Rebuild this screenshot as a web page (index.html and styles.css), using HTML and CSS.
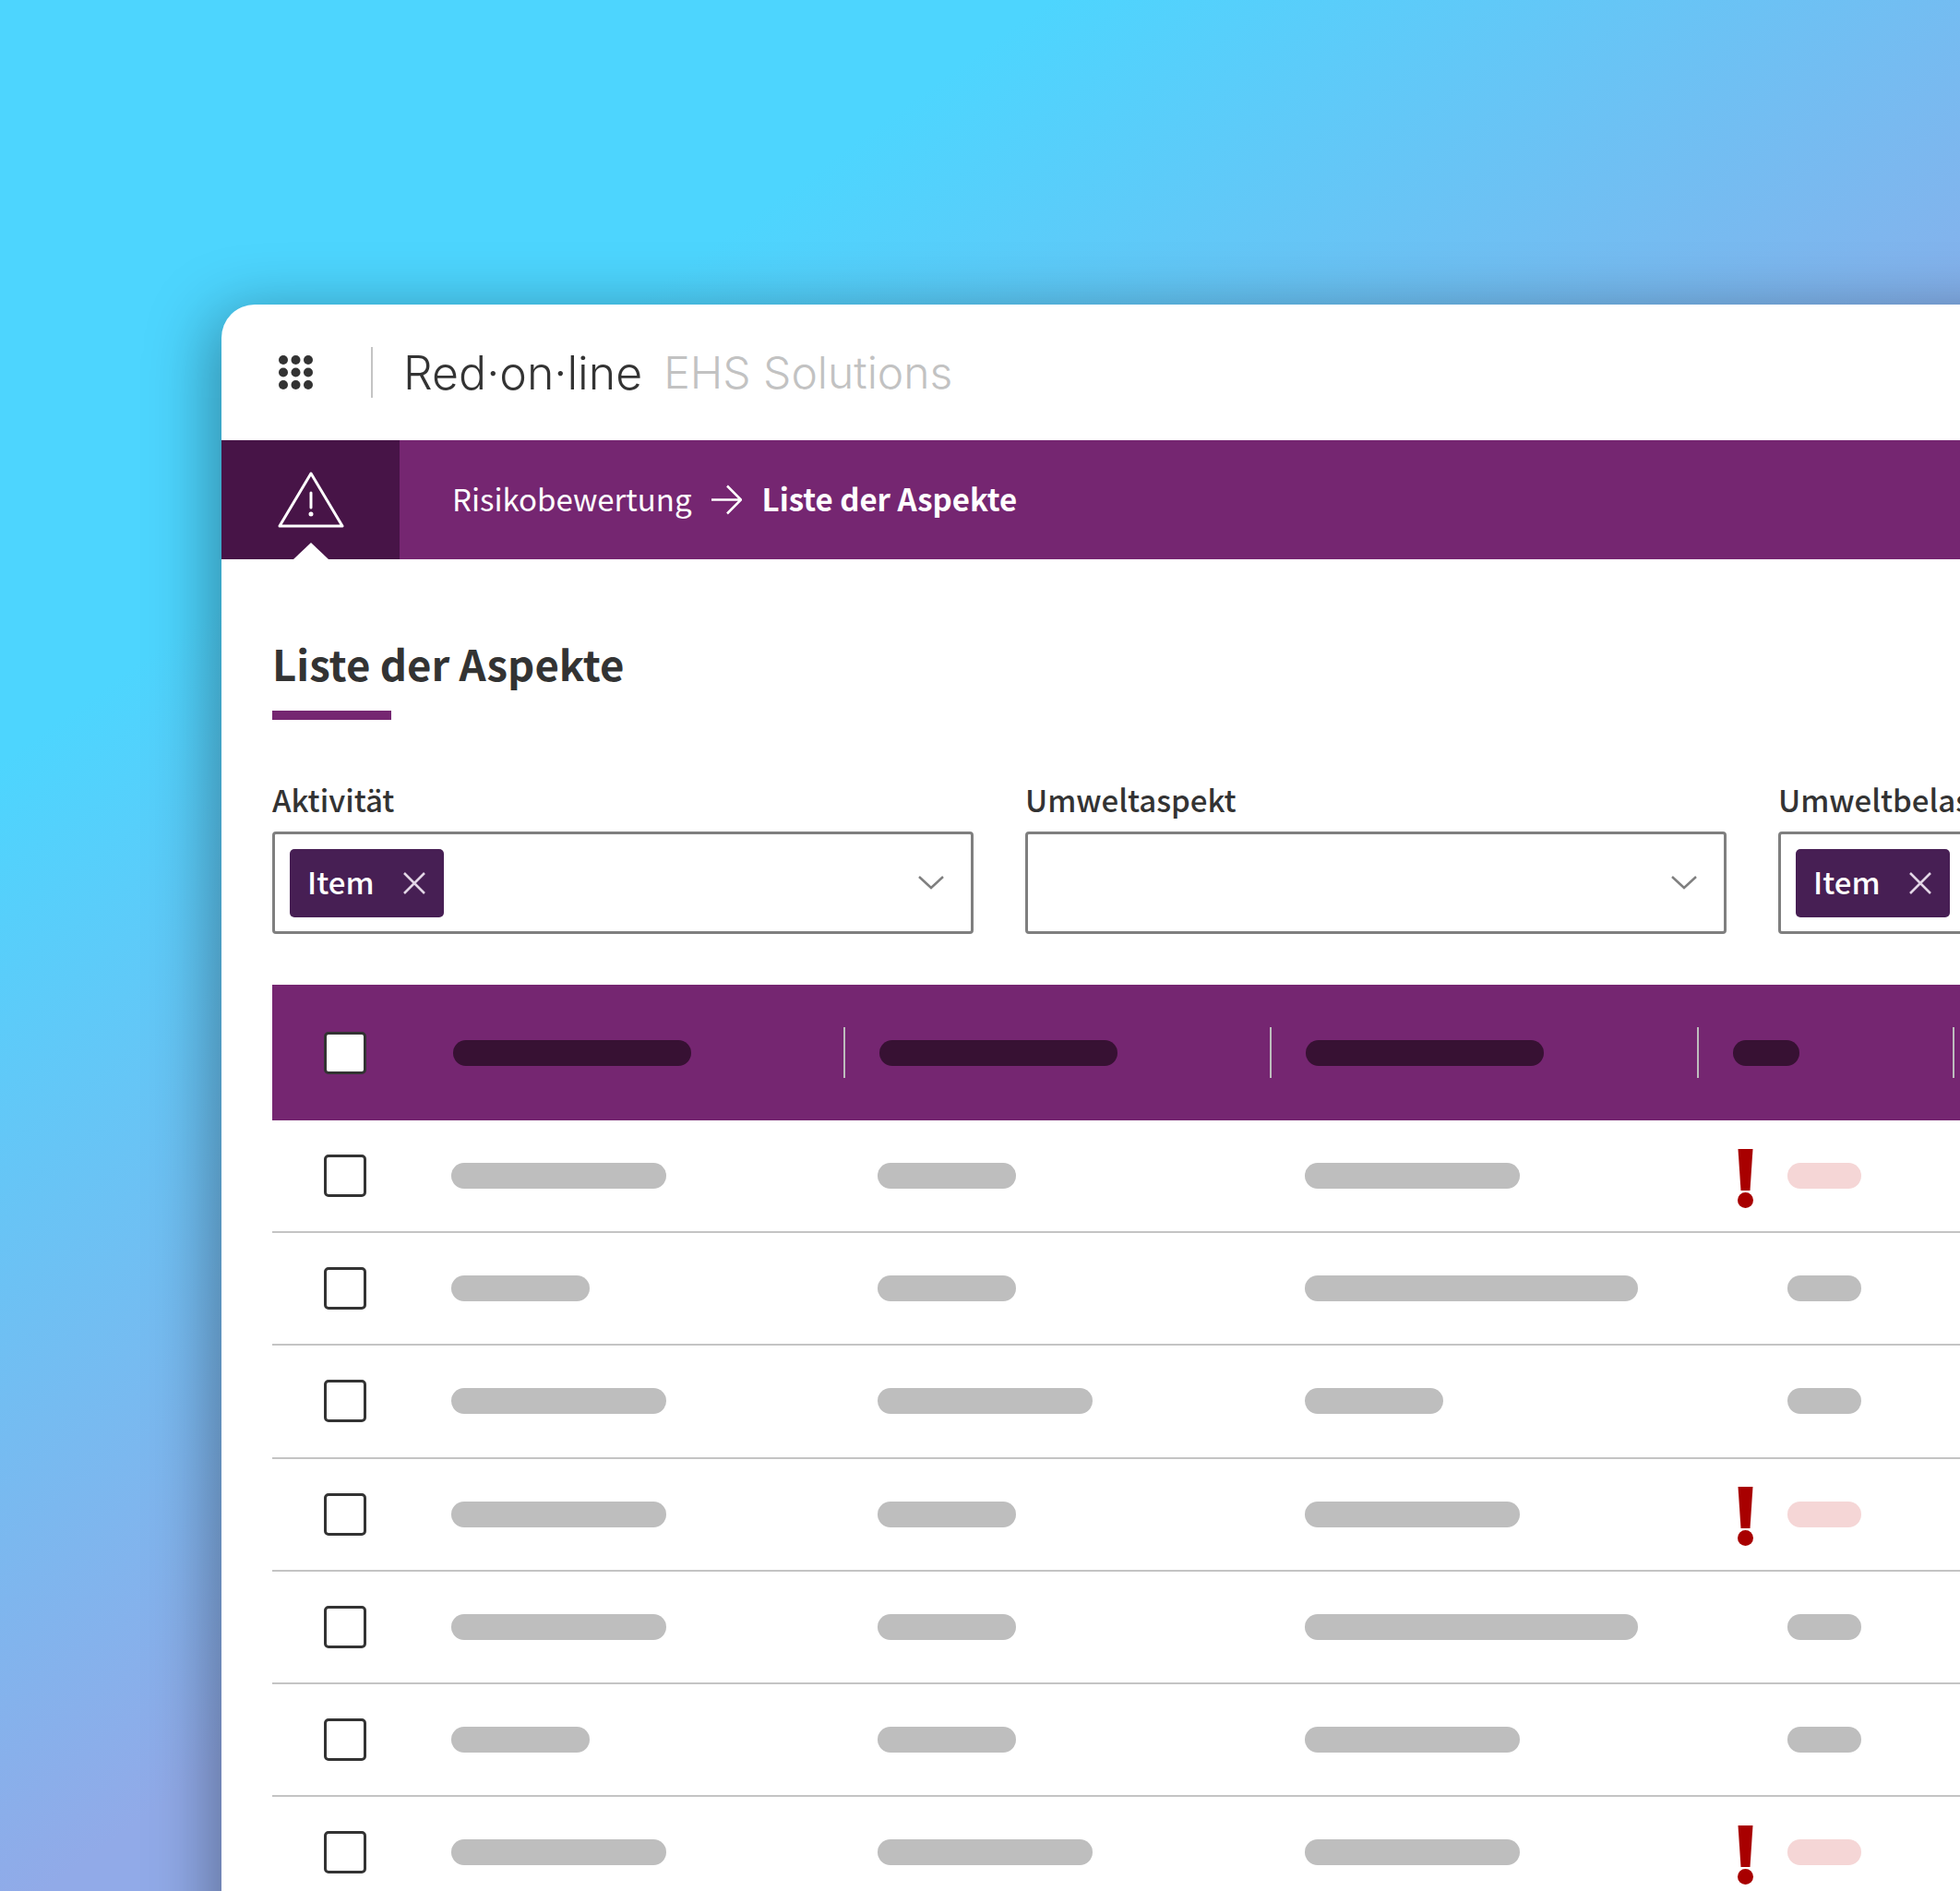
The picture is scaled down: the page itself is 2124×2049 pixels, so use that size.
FILE: index.html
```html
<!DOCTYPE html>
<html lang="de">
<head>
  <meta charset="UTF-8" />
  <title>Liste der Aspekte</title>
  <link rel="stylesheet" href="styles.css">
</head>
<body>
  <div class="window">
    <header class="topbar">
      <svg class="apps" width="37" height="37" viewBox="0 0 37 37" fill="#333">
        <circle cx="5" cy="5" r="5"/><circle cx="18.5" cy="5" r="5"/><circle cx="32" cy="5" r="5"/>
        <circle cx="5" cy="18.5" r="5"/><circle cx="18.5" cy="18.5" r="5"/><circle cx="32" cy="18.5" r="5"/>
        <circle cx="5" cy="32" r="5"/><circle cx="18.5" cy="32" r="5"/><circle cx="32" cy="32" r="5"/>
      </svg>
      <span class="topbar-sep"></span>
      <span class="brand">Red·on·line</span>
      <span class="product">EHS Solutions</span>
    </header>

    <nav class="crumbbar">
      <div class="module">
        <svg width="72" height="62" viewBox="0 0 72 62" fill="none" stroke="#fff" stroke-width="3" stroke-linejoin="round" stroke-linecap="round">
          <path d="M36 2 L70 59 H2 Z"/>
          <path d="M36 23 V39"/>
          <circle cx="36" cy="46" r="1" fill="#fff"/>
        </svg>
      </div>
      <span class="crumb">Risikobewertung</span>
      <svg class="crumb-arrow" width="33" height="33" viewBox="0 0 33 33" fill="none" stroke="#fff" stroke-width="2.5">
        <path d="M0 16.5 H31 M17 1.5 L32 16.5 L17 31.5"/>
      </svg>
      <span class="crumb current">Liste der Aspekte</span>
    </nav>

    <main class="content">
      <h1>Liste der Aspekte</h1>
      <div class="title-rule"></div>

      <div class="filters">
        <div class="filter">
          <label>Aktivität</label>
          <div class="select">
            <span class="chip">Item
              <svg width="24" height="24" viewBox="0 0 24 24" stroke="#e3d6e6" stroke-width="2.5"><path d="M1 1 L23 23 M23 1 L1 23"/></svg>
            </span>
            <svg class="chevron" width="28" height="15" viewBox="0 0 28 15" fill="none" stroke="#7f7f7f" stroke-width="2.5"><path d="M1 1 L14 13 L27 1"/></svg>
          </div>
        </div>
        <div class="filter">
          <label>Umweltaspekt</label>
          <div class="select">
            <svg class="chevron" width="28" height="15" viewBox="0 0 28 15" fill="none" stroke="#7f7f7f" stroke-width="2.5"><path d="M1 1 L14 13 L27 1"/></svg>
          </div>
        </div>
        <div class="filter">
          <label>Umweltbelastung</label>
          <div class="select">
            <span class="chip">Item
              <svg width="24" height="24" viewBox="0 0 24 24" stroke="#e3d6e6" stroke-width="2.5"><path d="M1 1 L23 23 M23 1 L1 23"/></svg>
            </span>
            <svg class="chevron" width="28" height="15" viewBox="0 0 28 15" fill="none" stroke="#7f7f7f" stroke-width="2.5"><path d="M1 1 L14 13 L27 1"/></svg>
          </div>
        </div>
      </div>

      <div class="table">
        <div class="thead">
          <div class="check-cell"><span class="check filled"></span></div>
          <div class="th"><span class="pill dark w-head"></span><span class="th-sep"></span></div>
          <div class="th"><span class="pill dark w-head"></span><span class="th-sep"></span></div>
          <div class="th"><span class="pill dark w-head"></span><span class="th-sep"></span></div>
          <div class="th last"><span class="pill dark w-tiny"></span><span class="th-sep"></span></div>
        </div>

        <div class="row">
          <div class="check-cell"><span class="check"></span></div>
          <div class="td"><span class="pill w-m"></span></div>
          <div class="td"><span class="pill w-s"></span></div>
          <div class="td"><span class="pill w-m"></span></div>
          <div class="td"><span class="flag-slot"><svg width="17" height="64" viewBox="0 0 17 64" fill="#a80000"><path d="M0.5 0 H16.5 L13.5 45 H3.5 Z"/><circle cx="8.5" cy="55.5" r="8.5"/></svg></span><span class="pill pink w-xs"></span></div>
        </div>
        <div class="row">
          <div class="check-cell"><span class="check"></span></div>
          <div class="td"><span class="pill w-s"></span></div>
          <div class="td"><span class="pill w-s"></span></div>
          <div class="td"><span class="pill w-l"></span></div>
          <div class="td"><span class="flag-slot"></span><span class="pill w-xs"></span></div>
        </div>
        <div class="row">
          <div class="check-cell"><span class="check"></span></div>
          <div class="td"><span class="pill w-m"></span></div>
          <div class="td"><span class="pill w-m"></span></div>
          <div class="td"><span class="pill w-s"></span></div>
          <div class="td"><span class="flag-slot"></span><span class="pill w-xs"></span></div>
        </div>
        <div class="row">
          <div class="check-cell"><span class="check"></span></div>
          <div class="td"><span class="pill w-m"></span></div>
          <div class="td"><span class="pill w-s"></span></div>
          <div class="td"><span class="pill w-m"></span></div>
          <div class="td"><span class="flag-slot"><svg width="17" height="64" viewBox="0 0 17 64" fill="#a80000"><path d="M0.5 0 H16.5 L13.5 45 H3.5 Z"/><circle cx="8.5" cy="55.5" r="8.5"/></svg></span><span class="pill pink w-xs"></span></div>
        </div>
        <div class="row">
          <div class="check-cell"><span class="check"></span></div>
          <div class="td"><span class="pill w-m"></span></div>
          <div class="td"><span class="pill w-s"></span></div>
          <div class="td"><span class="pill w-l"></span></div>
          <div class="td"><span class="flag-slot"></span><span class="pill w-xs"></span></div>
        </div>
        <div class="row">
          <div class="check-cell"><span class="check"></span></div>
          <div class="td"><span class="pill w-s"></span></div>
          <div class="td"><span class="pill w-s"></span></div>
          <div class="td"><span class="pill w-m"></span></div>
          <div class="td"><span class="flag-slot"></span><span class="pill w-xs"></span></div>
        </div>
        <div class="row">
          <div class="check-cell"><span class="check"></span></div>
          <div class="td"><span class="pill w-m"></span></div>
          <div class="td"><span class="pill w-m"></span></div>
          <div class="td"><span class="pill w-m"></span></div>
          <div class="td"><span class="flag-slot"><svg width="17" height="64" viewBox="0 0 17 64" fill="#a80000"><path d="M0.5 0 H16.5 L13.5 45 H3.5 Z"/><circle cx="8.5" cy="55.5" r="8.5"/></svg></span><span class="pill pink w-xs"></span></div>
        </div>
      </div>
    </main>
  </div>
</body>
</html>
```

FILE: styles.css
```css
html, body {
  margin: 0;
  height: 2049px;
  overflow: hidden;
}
body {
  background: linear-gradient(144deg, #4dd5fe 23%, #91aae8 58%);
  font-family: "Noto Sans CJK SC", "Noto Sans", sans-serif;
  color: #333;
  padding-top: 330px;
  box-sizing: border-box;
}
.window {
  margin-left: 240px;
  width: 2000px;
  height: 1800px;
  background: #fff;
  border-radius: 36px 36px 0 0;
  box-shadow: -10px 10px 70px rgba(0, 0, 0, 0.35);
  overflow: hidden;
}

/* top bar */
.topbar {
  height: 147px;
  display: flex;
  align-items: center;
  padding-left: 62px;
}
.topbar-sep {
  width: 2px;
  height: 55px;
  background: #c4c4c4;
  margin: 0 33px 0 63px;
}
.brand, .product {
  font-family: Inter, sans-serif;
  font-weight: 300;
}
.brand {
  font-size: 50px;
  color: #333;
  margin-right: 23px;
}
.product {
  font-size: 48px;
  color: #c2c2c2;
}

/* breadcrumb */
.crumbbar {
  height: 129px;
  background: #752671;
  display: flex;
  align-items: center;
  color: #fff;
  font-size: 33px;
}
.module {
  position: relative;
  width: 193px;
  height: 100%;
  background: #471447;
  display: flex;
  align-items: center;
  justify-content: center;
  margin-right: 57px;
}
.module::after {
  content: "";
  position: absolute;
  left: 78px;
  bottom: 0;
  border-left: 19px solid transparent;
  border-right: 19px solid transparent;
  border-bottom: 18px solid #fff;
}
.crumb-arrow {
  margin: 0 22px 0 21px;
}
.crumb {
  position: relative;
  top: -2px;
}
.crumb.current {
  font-weight: 700;
}

/* content */
.content {
  padding: 0 0 0 55px;
}
h1 {
  margin: 0;
  padding-top: 80px;
  font-size: 45.5px;
  line-height: 64px;
  font-weight: 700;
}
.title-rule {
  width: 129px;
  height: 10px;
  background: #752671;
  margin-top: 20px;
}
.filters {
  display: grid;
  grid-template-columns: repeat(3, 760px);
  column-gap: 56px;
  margin-top: 63px;
}
.filter label {
  display: block;
  font-size: 33px;
  font-weight: 500;
  line-height: 46px;
  margin-bottom: 12px;
}
.select {
  height: 111px;
  box-sizing: border-box;
  border: 3px solid #7f7f7f;
  border-radius: 4px;
  display: flex;
  align-items: center;
  padding: 0 29px 0 16px;
}
.chip {
  width: 167px;
  height: 74px;
  box-sizing: border-box;
  background: #471f54;
  border-radius: 5px;
  color: #fff;
  font-size: 33px;
  font-weight: 500;
  display: flex;
  align-items: center;
  justify-content: space-between;
  padding: 0 20px 3px 19px;
}
.chip svg {
  margin-top: 3px;
}
.chevron {
  margin-left: auto;
}

/* table */
.table {
  margin-top: 55px;
}
.thead, .row {
  display: grid;
  align-items: center;
}
.thead {
  height: 147px;
  background: #752671;
  grid-template-columns: 196px 462px 462px 463px 1fr;
}
.row {
  height: 122.2px;
  box-sizing: border-box;
  border-bottom: 2px solid #c4c4c4;
  grid-template-columns: 194px 462px 462.5px 461.5px 1fr;
}
.check-cell {
  padding-left: 56px;
  display: flex;
}
.check {
  width: 46px;
  height: 46px;
  box-sizing: border-box;
  border: 3px solid #333;
  border-radius: 5px;
  background: #fff;
}
.th {
  display: flex;
  align-items: center;
  justify-content: space-between;
  padding-right: 37px;
}
.th.last {
  width: 240px;
  padding-right: 0;
}
.th-sep {
  width: 2px;
  height: 55px;
  background: #bdbdbd;
}
.td {
  display: flex;
  align-items: center;
}
.flag-slot {
  width: 62px;
  padding: 5px 0 0 8px;
  box-sizing: border-box;
  display: flex;
}
.pill {
  display: block;
  height: 28px;
  border-radius: 14px;
  background: #bebebe;
}
.pill.dark { background: #371133; }
.pill.pink { background: #f5d6d6; }
.w-head { width: 258px; }
.w-tiny { width: 72px; }
.w-xs { width: 80px; }
.w-s { width: 150px; }
.w-m { width: 233px; }
.w-l { width: 361px; }
```
